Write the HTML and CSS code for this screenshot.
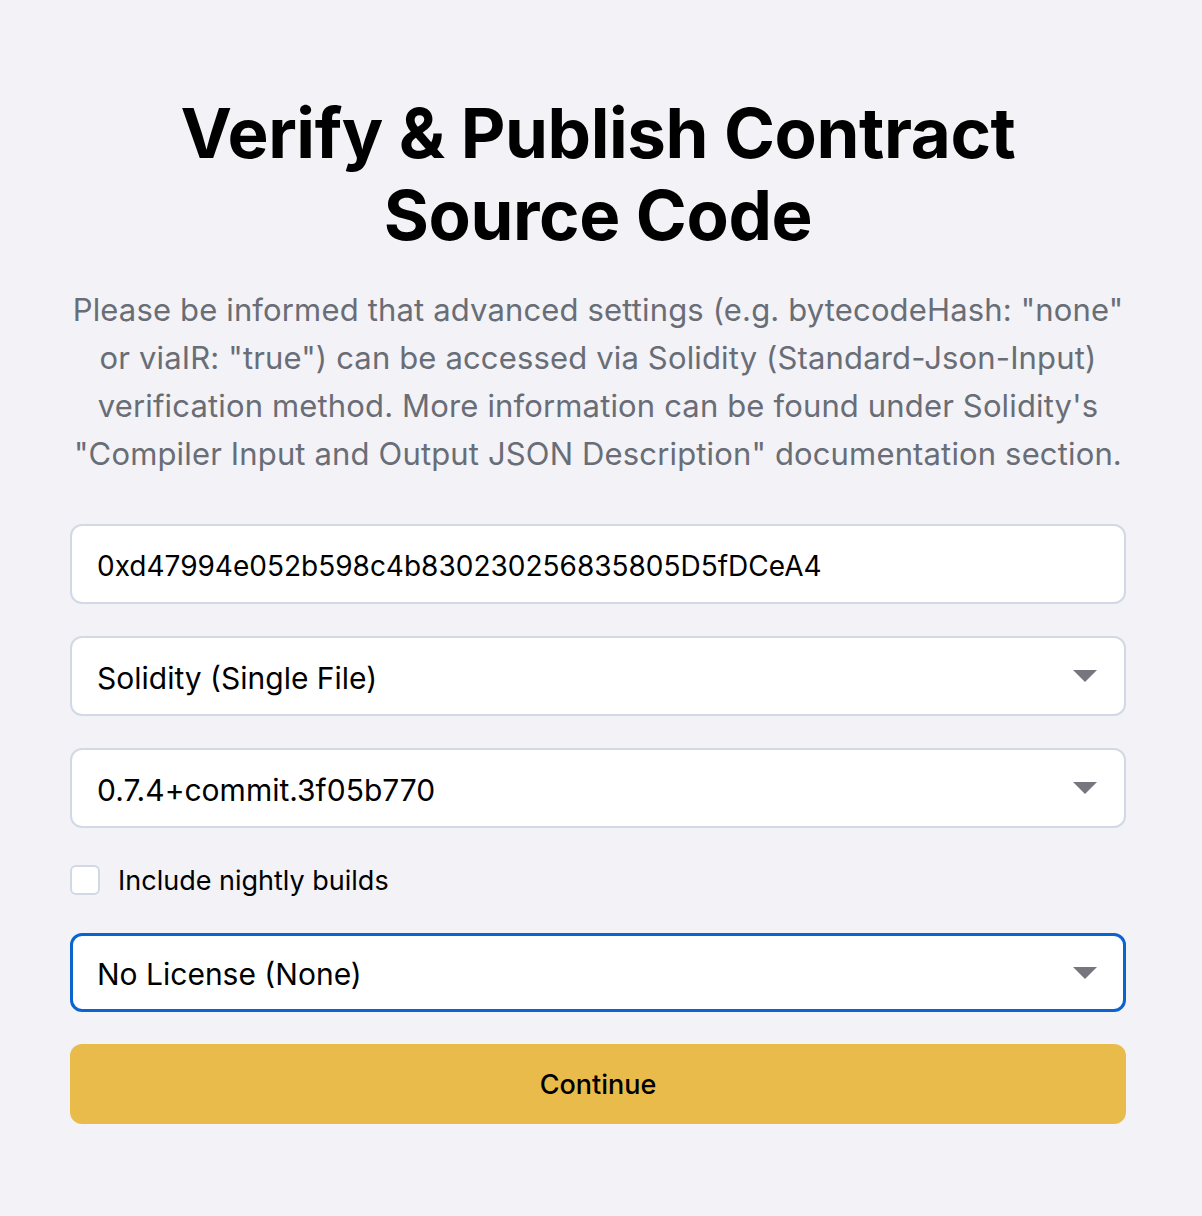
FILE: index.html
```html
<!DOCTYPE html>
<html lang="en">
<head>
    <meta charset="UTF-8">
    <meta name="viewport" content="width=device-width, initial-scale=1.0">
    <title>Verify &amp; Publish Contract Source Code</title>
    <link rel="stylesheet" href="styles.css">
</head>
<body>
    <div class="page">
        <h1>Verify &amp; Publish Contract Source Code</h1>
        <p class="info">Please be informed that advanced settings (e.g. bytecodeHash: "none" or viaIR: "true") can be accessed via Solidity (Standard-Json-Input) verification method. More information can be found under Solidity's "Compiler Input and Output JSON Description" documentation section.</p>

        <form class="form">
            <input class="field" type="text" value="0xd47994e052b598c4b830230256835805D5fDCeA4">

            <div class="select">
                <span>Solidity (Single File)</span>
                <span class="arrow"></span>
            </div>

            <div class="select">
                <span>0.7.4+commit.3f05b770</span>
                <span class="arrow"></span>
            </div>

            <label class="check">
                <span class="box"></span>
                Include nightly builds
            </label>

            <div class="select focused">
                <span>No License (None)</span>
                <span class="arrow"></span>
            </div>

            <button type="button" class="continue">Continue</button>
        </form>
    </div>
</body>
</html>
```

FILE: styles.css
```css
body {
    font-family: Inter, "Noto Sans", sans-serif;
    background-color: #f2f2f7;
    margin: 0;
    color: #000;
}

.page {
    width: 1056px;
    margin: 0 0 0 70px;
    padding-top: 92px;
}

h1 {
    text-align: center;
    font-size: 69px;
    line-height: 82px;
    font-weight: 700;
    letter-spacing: -0.4px;
    margin: 0 0 30px;
}

.info {
    text-align: center;
    font-size: 31px;
    line-height: 48px;
    letter-spacing: 0.15px;
    color: #696d76;
    margin: 0 -4px 46px;
}

.form {
    display: flex;
    flex-direction: column;
    gap: 32px;
}

.field,
.select {
    box-sizing: border-box;
    width: 100%;
    height: 80px;
    padding: 3px 25px 0;
    background-color: white;
    border: 2px solid #d0d9e4;
    border-radius: 12px;
    font-family: inherit;
    font-size: 28px;
    color: #000;
}

.select {
    display: flex;
    align-items: center;
    justify-content: space-between;
    font-size: 30px;
}

.select.focused {
    border: 3px solid #0b63d0;
    padding: 3px 24px 0;
    height: 79px;
}

.arrow {
    width: 0;
    height: 0;
    border-left: 12px solid transparent;
    border-right: 12px solid transparent;
    border-top: 12px solid #76767f;
    margin: -3px 2px 0 0;
}

.check {
    display: flex;
    align-items: center;
    gap: 18px;
    font-size: 27px;
    height: 30px;
    margin: 5px 0 6px;
}

.box {
    box-sizing: border-box;
    width: 30px;
    height: 30px;
    background-color: white;
    border: 2px solid #d0d9e4;
    border-radius: 6px;
}

.continue {
    height: 80px;
    border: none;
    border-radius: 12px;
    background-color: #e9bb4b;
    font-family: inherit;
    font-size: 27px;
    font-weight: 500;
    color: #000;
}
```
